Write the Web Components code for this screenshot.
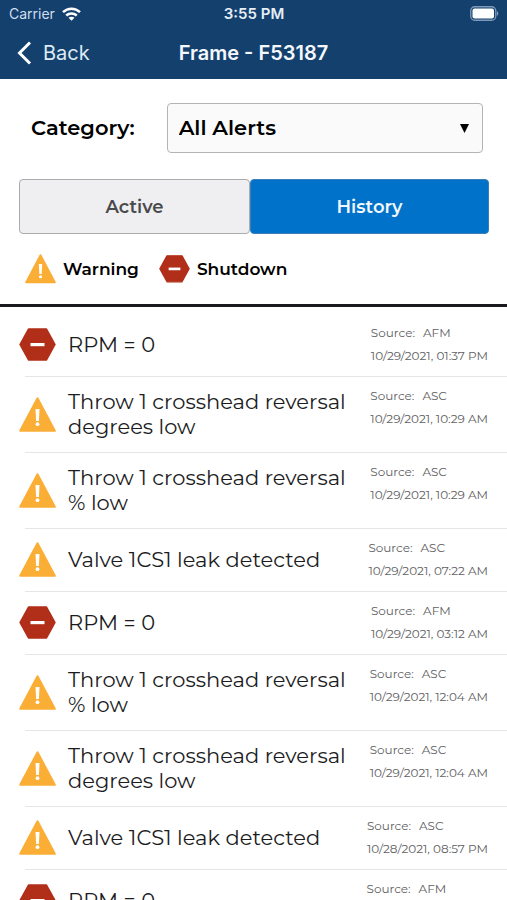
<!DOCTYPE html>
<html lang="en">
<head>
<meta charset="utf-8">
<meta name="viewport" content="width=device-width, initial-scale=1">
<title>Frame - F53187</title>
<style>
html, body { margin: 0; height: 100%; }
body { background: #fff; color: #1c1c1e; font-family: Montserrat, Inter, sans-serif; }
</style>
</head>
<body>
<alerts-app></alerts-app>
<script>
const define = (name, html, setup) => {
  const template = document.createElement('template');
  template.innerHTML = html;
  customElements.define(name, class extends HTMLElement {
    constructor() {
      super();
      this.attachShadow({ mode: 'open' }).append(template.content.cloneNode(true));
    }
    connectedCallback() { if (setup) setup(this, this.shadowRoot); }
  });
};

define('status-bar', `
<style>
:host { display: grid; grid-template-columns: 1fr auto 1fr; align-items: center; height: 27px; padding: 0 8px 0 9px; color: #e6eef7; font: 14px/20px Inter, sans-serif; }
.carrier { display: flex; align-items: center; gap: 7px; color: #cfdeed; }
.time { font-size: 15px; font-weight: 600; }
.battery { justify-self: end; }
svg { display: block; }
</style>
<span class="carrier"><span>Carrier</span>
<svg width="19" height="14" viewBox="0 0 19 14" aria-hidden="true"><g fill="none" stroke="#fff" stroke-width="2.5"><path d="M1 5.2C5.8.6 13.2.6 18 5.2"/><path d="M4.2 8.5c3-2.8 7.600-2.800 10.600 0"/></g><path d="M6.500 10.800c1.700-1.500 4.300-1.500 6 0l-3 3z" fill="#fff"/></svg></span>
<span class="time">3:55 PM</span>
<svg class="battery" width="29" height="15" viewBox="0 0 29 15" aria-label="Battery full"><rect x=".75" y=".75" width="25" height="13.500" rx="4" fill="none" stroke="#7f9ab8" stroke-width="1.300"/><rect x="2.500" y="2.500" width="21.500" height="10" rx="2" fill="#fff"/><path d="M26.800 5c2 .8 2 4.200 0 5z" fill="#7f9ab8"/></svg>`);

define('nav-bar', `
<style>
:host { display: grid; grid-template-columns: 1fr auto 1fr; align-items: center; height: 52px; padding: 0 17px; color: #f4f8fc; font: 20px/26px Inter, sans-serif; }
button { justify-self: start; display: flex; align-items: center; gap: 11px; margin: 0; padding: 0; border: 0; background: none; color: #dfeaf5; font: inherit; cursor: pointer; }
h1 { margin: 0; font-size: 20px; font-weight: 600; }
</style>
<button type="button"><svg width="15" height="24" viewBox="0 0 15 24" aria-hidden="true"><path d="M13 1.500 2.500 12 13 22.500" fill="none" stroke="#fff" stroke-width="3"/></svg>Back</button>
<h1><slot></slot></h1>`);

define('alert-icon', `
<style>
:host { display: block; width: 37px; flex: none; }
svg { display: block; width: 100%; height: auto; }
:host([kind=warning]) .shutdown, :host([kind=shutdown]) .warning { display: none; }
</style>
<svg class="warning" viewBox="0 0 37 35" aria-hidden="true"><path d="M18.500 1.200 35.800 33.800H1.200Z" fill="#fbae36" stroke="#fbae36" stroke-width="2" stroke-linejoin="round"/><path d="M16.500 12h4l-.6 12h-2.800z" fill="#fff"/><circle cx="18.500" cy="27.200" r="1.900" fill="#fff"/></svg>
<svg class="shutdown" viewBox="0 0 37 33" aria-hidden="true"><path d="M9.500 1h18L36 16.500 27.500 32h-18L1 16.500Z" fill="#b12e19" stroke="#b12e19" stroke-width="1.500" stroke-linejoin="round"/><path d="M11.500 15h14v3.200h-14z" fill="#fff"/></svg>`);

define('category-picker', `
<style>
:host { display: flex; align-items: center; gap: 32px; padding: 0 6px 0 12px; color: #000; font-weight: 600; font-size: 21px; line-height: 26px; }
.box { flex: 1; display: grid; align-items: center; }
.box > * { grid-area: 1 / 1; }
select { appearance: none; width: 100%; height: 50px; margin: 0; padding: 0 36px 0 11px; border: 1px solid #b4b4b4; border-radius: 4px; background: #fafafa; color: #000; font: inherit; }
.arrow { justify-self: end; margin-right: 14px; pointer-events: none; }
</style>
<label for="category">Category:</label>
<span class="box"><select id="category"><option>All Alerts</option></select>
<svg class="arrow" width="9" height="9" viewBox="0 0 9 9" aria-hidden="true"><path d="M0 0h9L4.500 9z"/></svg></span>`);

define('segment-control', `
<style>
:host { display: grid; grid-template-columns: 231fr 239fr; }
button { height: 55px; margin: 0; padding: 0; border: 1px solid #aaabad; border-radius: 4px; background: #efeff1; color: #4a4a4c; font: 600 18px/24px Montserrat, Inter, sans-serif; cursor: pointer; }
button[aria-pressed=true] { border-color: #3a7fb8; background: #0072c9; color: #f2f8fd; }
</style>
<button type="button" aria-pressed="false">Active</button><button type="button" aria-pressed="true">History</button>`);

define('alert-legend', `
<style>
:host { display: flex; align-items: center; gap: 20px; padding: 0 6px; color: #000; font-weight: 600; font-size: 17px; line-height: 30px; }
span { display: flex; align-items: center; gap: 7px; }
alert-icon { width: 31px; }
</style>
<span><alert-icon kind="warning"></alert-icon>Warning</span>
<span><alert-icon kind="shutdown"></alert-icon>Shutdown</span>`);

define('alert-row', `
<style>
:host { display: flex; align-items: center; padding-left: 19px; background: linear-gradient(#e6e6e6, #e6e6e6) 25px 100% / 100% 1px no-repeat; }
alert-icon { margin-bottom: 2px; }
.title { flex: 1; min-width: 0; padding: 12px 12px 14px; font-size: 21px; line-height: 25px; }
.meta { display: grid; gap: 1px; align-self: flex-start; padding: 8px 19px 10px 0; color: #606062; font-size: 12px; line-height: 22px; white-space: nowrap; }
.source { margin-left: 8px; }
</style>
<alert-icon></alert-icon>
<div class="title"><slot></slot></div>
<div class="meta"><div>Source:<span class="source"></span></div><div class="date"></div></div>`,
(host, root) => {
  root.querySelector('alert-icon').setAttribute('kind', host.getAttribute('kind'));
  root.querySelector('.source').textContent = host.getAttribute('source');
  root.querySelector('.date').textContent = host.getAttribute('date');
});

define('alerts-app', `
<style>
:host { display: flex; flex-direction: column; height: 100vh; }
header { flex: none; background: #14406e; }
.filters { flex: none; display: flex; flex-direction: column; padding: 24px 18px 20px 19px; border-bottom: 3px solid #1b1b1d; }
segment-control { margin: 26px 0 20px; }
main { flex: 1; min-height: 0; overflow-y: auto; scrollbar-width: none; padding-top: 7px; }
</style>
<header><status-bar></status-bar><nav-bar>Frame - F53187</nav-bar></header>
<section class="filters"><category-picker></category-picker><segment-control></segment-control><alert-legend></alert-legend></section>
<main>
<alert-row kind="shutdown" source="AFM" date="10/29/2021, 01:37 PM">RPM = 0</alert-row>
<alert-row kind="warning" source="ASC" date="10/29/2021, 10:29 AM">Throw 1 crosshead reversal degrees low</alert-row>
<alert-row kind="warning" source="ASC" date="10/29/2021, 10:29 AM">Throw 1 crosshead reversal % low</alert-row>
<alert-row kind="warning" source="ASC" date="10/29/2021, 07:22 AM">Valve 1CS1 leak detected</alert-row>
<alert-row kind="shutdown" source="AFM" date="10/29/2021, 03:12 AM">RPM = 0</alert-row>
<alert-row kind="warning" source="ASC" date="10/29/2021, 12:04 AM">Throw 1 crosshead reversal % low</alert-row>
<alert-row kind="warning" source="ASC" date="10/29/2021, 12:04 AM">Throw 1 crosshead reversal degrees low</alert-row>
<alert-row kind="warning" source="ASC" date="10/28/2021, 08:57 PM">Valve 1CS1 leak detected</alert-row>
<alert-row kind="shutdown" source="AFM" date="10/28/2021, 08:56 PM">RPM = 0</alert-row>
</main>`);
</script>
</body>
</html>
